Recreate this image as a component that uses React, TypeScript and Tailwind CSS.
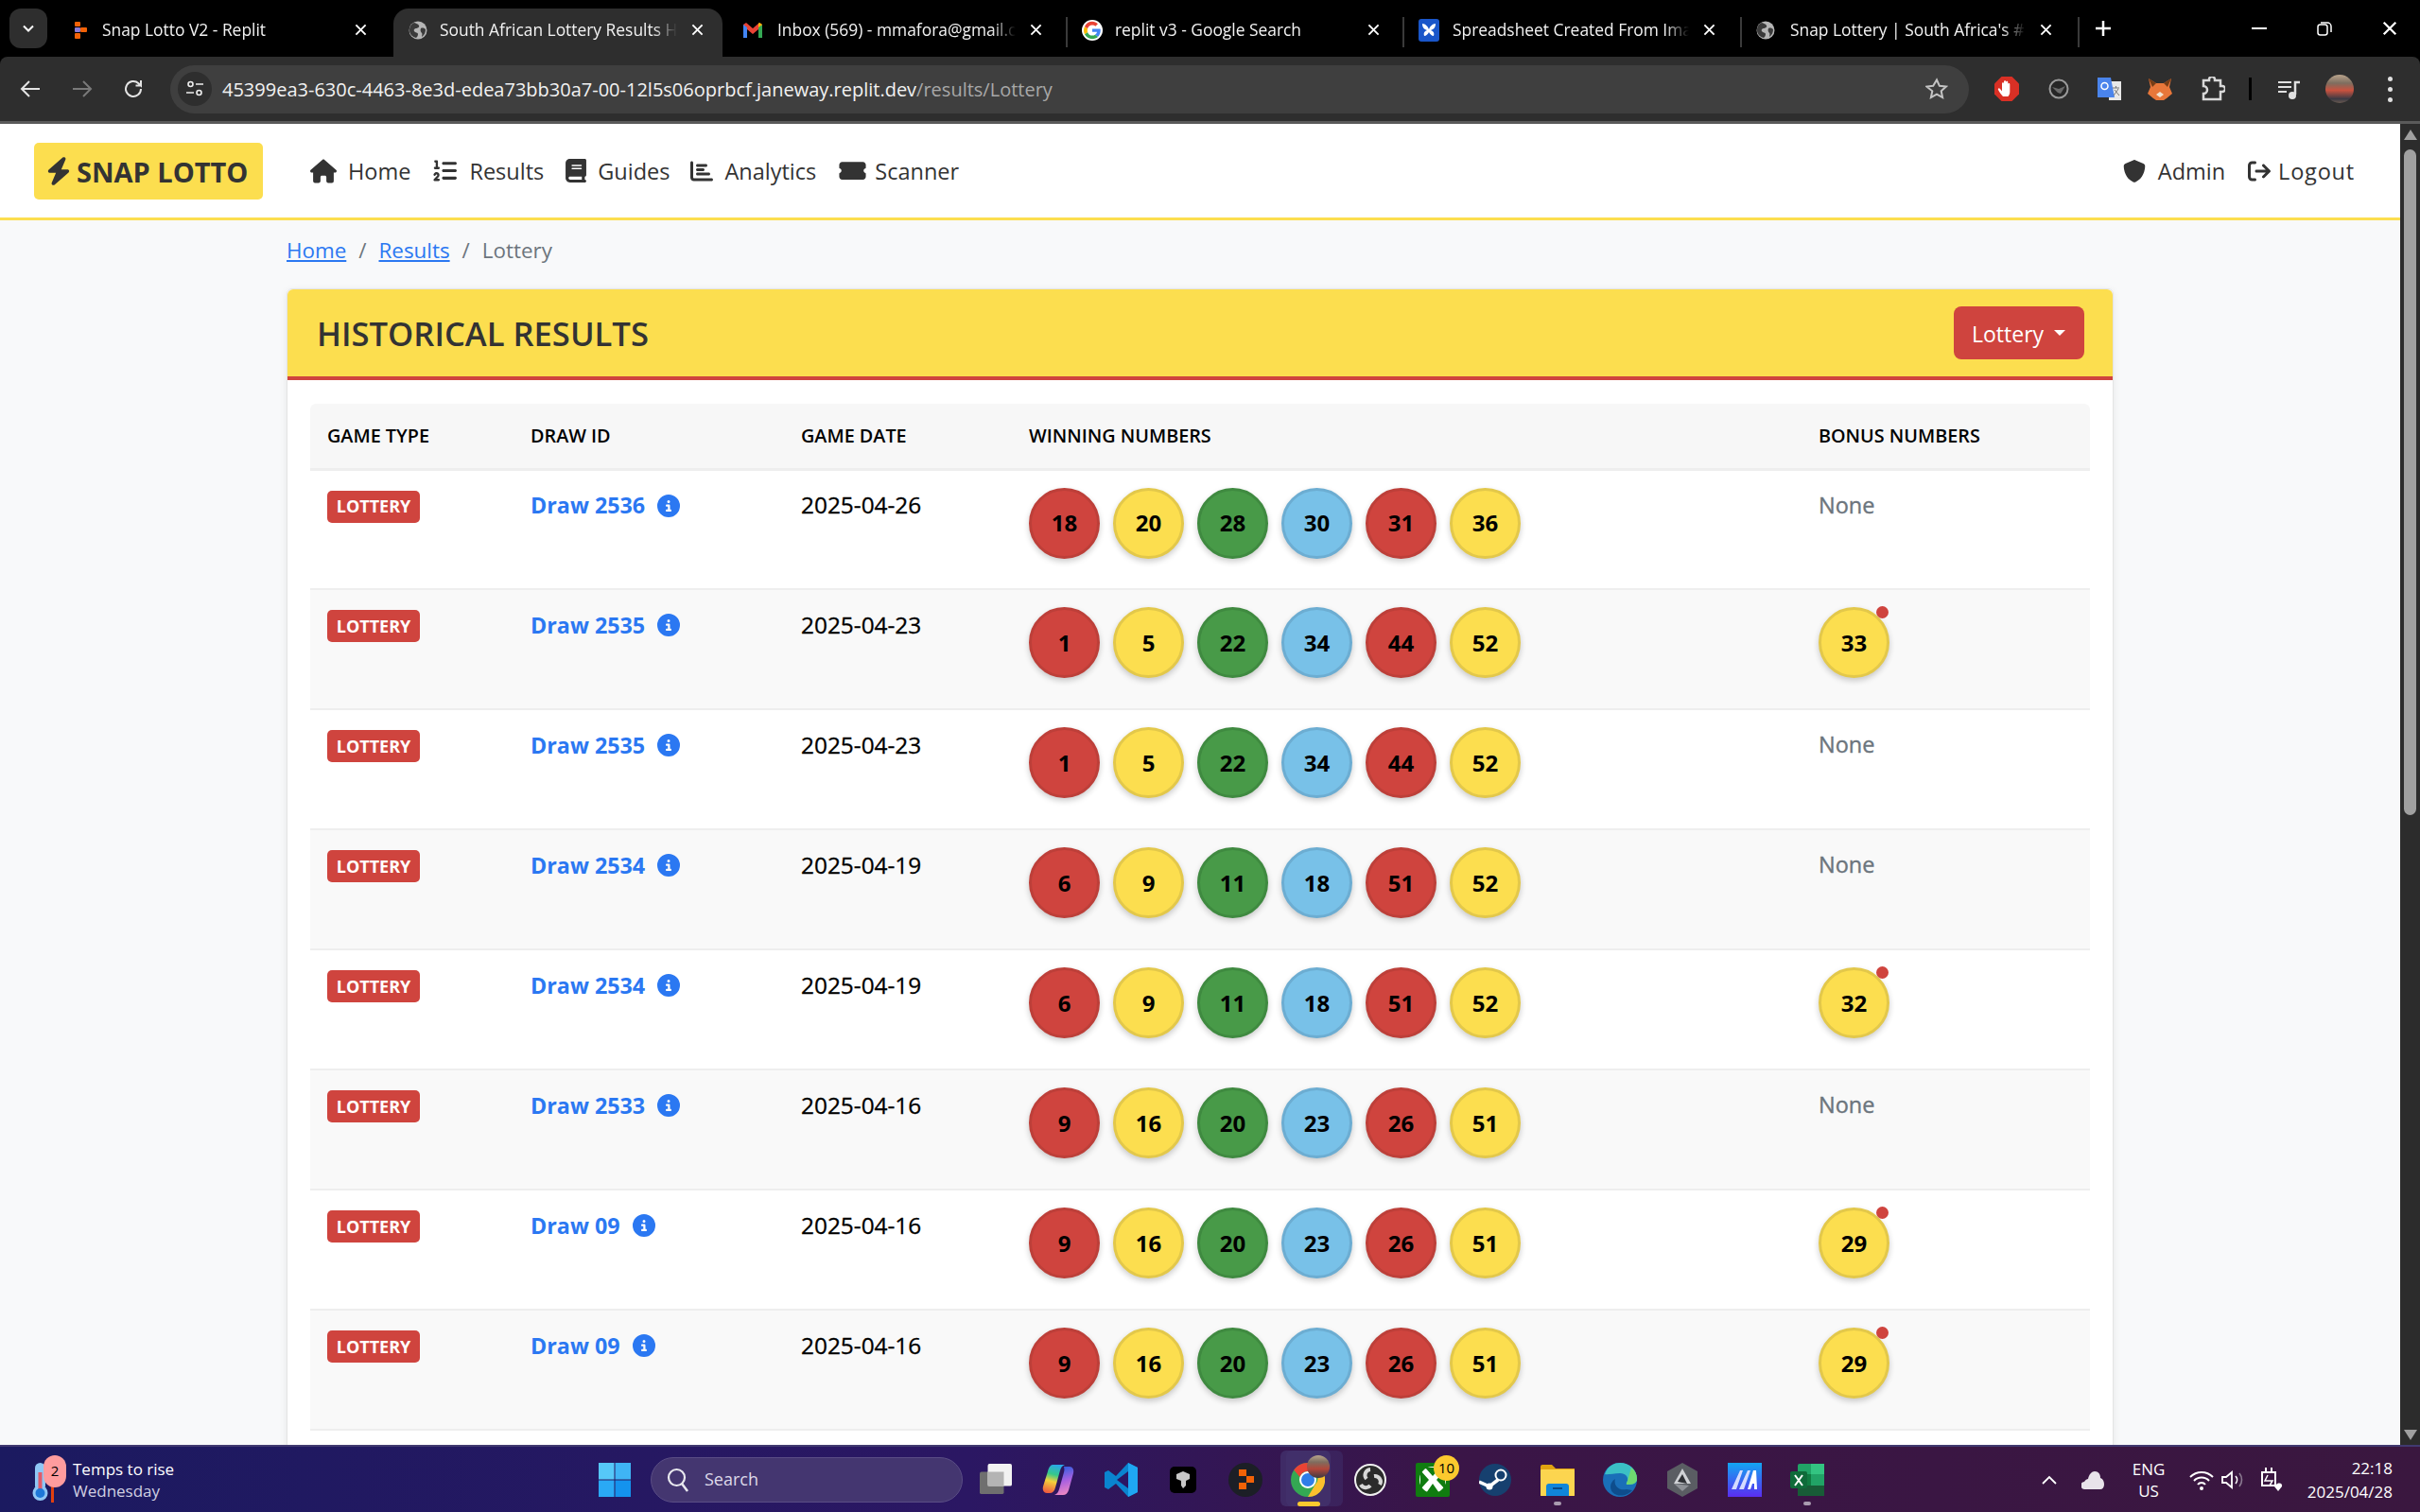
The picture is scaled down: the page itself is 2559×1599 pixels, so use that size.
import React from "react";
import { FaHouse, FaListOl, FaBook, FaChartBar, FaTicketSimple, FaShield, FaArrowRightFromBracket, FaBolt, FaCircleInfo } from "react-icons/fa6";

const Globe = () => (
  <svg viewBox="0 0 20 20" className="w-5 h-5 shrink-0">
    <circle cx="10" cy="10" r="9.5" fill="#b5b5b5" />
    <path d="M6 2c2 1 4 1 5 3s-2 3-3 3-3 1-2 3 4 1 4 3-1 3-2 4C4 17 1 14 1 10s2-7 5-8zM13 8c2-1 4 0 5 1 0 3-1 6-4 8 0-2 1-3 0-4s-2-3-1-5z" fill="#3a3a3a" />
  </svg>
);
const ReplitFav = () => (
  <svg viewBox="0 0 20 20" className="w-5 h-5 shrink-0">
    <rect x="3" y="1" width="6" height="5" rx="1" fill="#f26207" />
    <rect x="9" y="7" width="7" height="5" rx="1" fill="#f26207" />
    <rect x="3" y="13" width="6" height="6" rx="1" fill="#f26207" />
    <rect x="3" y="7" width="6" height="5" rx="1" fill="#8a7bd8" />
  </svg>
);
const GmailFav = () => (
  <svg viewBox="0 0 22 20" className="w-[22px] h-5 shrink-0 -ml-[3px] mr-[3px]">
    <path d="M1 4v14h4V9l6 5 6-5v9h4V4l-3-2-7 6-7-6z" fill="#ea4335" />
    <path d="M1 4v14h4V7z" fill="#4285f4" />
    <path d="M21 4v14h-4V7z" fill="#34a853" />
    <path d="M17 7l4-3-3-2-1 1z" fill="#fbbc04" />
  </svg>
);
const GoogleFav = () => (
  <svg viewBox="0 0 48 48" className="w-[22px] h-[22px] shrink-0">
    <circle cx="24" cy="24" r="24" fill="#fff" />
    <path d="M43 24.5c0-1.500-.1-2.700-.4-4H24v7.500h10.800c-.5 2.700-2 4.800-4.300 6.300l6.500 5c3.800-3.500 6-8.700 6-14.800z" fill="#4285f4" />
    <path d="M24 44c5.400 0 9.900-1.800 13-4.700l-6.500-5c-1.800 1.200-4 1.900-6.500 1.900-5 0-9.300-3.400-10.800-8l-6.700 5.200C9.800 39.800 16.400 44 24 44z" fill="#34a853" />
    <path d="M13.200 28.200c-.8-2.500-.8-5.300 0-7.800l-6.700-5.200c-2.800 5.600-2.800 12.600 0 18.200z" fill="#fbbc04" />
    <path d="M24 12c2.900 0 5.400 1 7.400 2.900l5.600-5.600C33.600 6.200 29.100 4 24 4 16.400 4 9.800 8.200 6.500 15.200l6.700 5.200C14.700 15.400 19 12 24 12z" fill="#ea4335" />
  </svg>
);
const SheetFav = () => (
  <svg viewBox="0 0 22 24" className="w-[22px] h-6 shrink-0">
    <rect width="22" height="24" rx="3" fill="#1a56c9" />
    <path d="M4 5c3 0 6 3 7 6 1-3 4-6 7-6 0 4-2 6-5 7 3 1 4 3 3 6-2 0-4-2-5-4-1 2-3 4-5 4-1-3 0-5 3-6-3-1-5-3-5-7z" fill="#fff" />
  </svg>
);
const X = ({ s = 14 }: { s?: number }) => (
  <svg viewBox="0 0 14 14" width={s} height={s} className="shrink-0">
    <path d="M1.500 1.500l11 11M12.500 1.500l-11 11" stroke="#fff" strokeWidth="2" />
  </svg>
);

const tabs = [
  { t: "Snap Lotto V2 - Replit", i: <ReplitFav />, wrap: "w-[356px]", inner: "ml-[12px] w-[252px]", active: false },
  { t: "South African Lottery Results Historical", i: <Globe />, wrap: "w-[348px] mr-[8px]", inner: "ml-[13px] w-[251px]", active: true },
  { t: "Inbox (569) - mmafora@gmail.com", i: <GmailFav />, wrap: "w-[356px]", inner: "ml-[12px] w-[252px]", active: false },
  { t: "replit v3 - Google Search", i: <GoogleFav />, wrap: "w-[356px]", inner: "ml-[13px] w-[252px]", active: false },
  { t: "Spreadsheet Created From Image", i: <SheetFav />, wrap: "w-[357px]", inner: "ml-[14px] w-[250px]", active: false },
  { t: "Snap Lottery | South Africa's #1 Lottery", i: <Globe />, wrap: "w-[357px]", inner: "ml-[16px] w-[249px]", active: false },
];

function TabBar() {
  return (
    <div className="h-[60px] bg-black flex items-end shrink-0 relative">
      <div className="ml-[10px] mb-[9px] w-[40px] h-[42px] rounded-[12px] bg-[#2e2e2e] flex items-center justify-center">
        <svg viewBox="0 0 12 8" className="w-3 h-2"><path d="M1 1.500l5 5 5-5" stroke="#fff" strokeWidth="2" fill="none" /></svg>
      </div>
      <div className="ml-[10px] flex h-[51px]">
        {tabs.map((tab, i) => (
          <div
            key={i}
            className={
              (tab.active ? "rounded-t-[16px] bg-[#2e2e2e] " : "") +
              "flex items-center pl-4 pb-[6px] relative " + tab.wrap
            }
          >
            {tab.i}
            <div className={"overflow-hidden whitespace-nowrap text-[17.4px] text-[#f2f2f2] [mask-image:linear-gradient(to_right,black_90%,transparent)] " + tab.inner}>
              {tab.t}
            </div>
            <div className="ml-[15px]"><X s={13} /></div>
            {i >= 2 && <div className="absolute right-[-1px] top-[9px] h-[32px] w-[2px] bg-[#3a3a3a]" />}
          </div>
        ))}
      </div>
      <svg viewBox="0 0 16 16" className="w-4 h-4 ml-[18px] mb-[22px] shrink-0"><path d="M8 0v16M0 8h16" stroke="#fff" strokeWidth="2.500" /></svg>
      <div className="ml-auto flex items-center mb-[22px] pr-[24px]">
        <div className="w-[16px] h-[2px] bg-white" />
        <svg viewBox="0 0 16 16" className="w-[16px] h-[16px] ml-[53px]"><rect x="1" y="4" width="10" height="11" rx="2.500" stroke="#fff" strokeWidth="1.500" fill="none" /><path d="M4 2h7a4 4 0 0 1 4 4v6" stroke="#fff" strokeWidth="1.500" fill="none" /></svg>
        <div className="ml-[53px]"><X s={16} /></div>
      </div>
    </div>
  );
}

function Toolbar() {
  return (
    <div className="h-[71px] bg-[#2e2e2e] border-b-[3px] border-[#5a5a5a] flex items-center shrink-0 rounded-t-[8px]">
      <svg viewBox="0 0 24 24" className="w-[24px] h-[24px] ml-[20px]"><path d="M22 12H3M11 4l-8 8 8 8" stroke="#e4e4e4" strokeWidth="2" fill="none" /></svg>
      <svg viewBox="0 0 24 24" className="w-[24px] h-[24px] ml-[31px]"><path d="M2 12h19M13 4l8 8-8 8" stroke="#7a7a7a" strokeWidth="2" fill="none" /></svg>
      <svg viewBox="0 0 24 24" className="w-[24px] h-[24px] ml-[30px]"><path d="M20 12a8 8 0 1 1-2.500-5.800L20 8.500V3M20 8.500h-5.500" stroke="#e4e4e4" strokeWidth="2" fill="none" /></svg>
      <div className="ml-[27px] w-[1902px] h-[51px] rounded-full bg-[#3f3f3f] flex items-center pl-[8px] pr-[22px]">
        <div className="w-[36px] h-[36px] rounded-full bg-[#2e2e2e] flex items-center justify-center shrink-0">
          <svg viewBox="0 0 20 20" className="w-5 h-5"><circle cx="5.500" cy="5" r="2.500" stroke="#eee" strokeWidth="1.600" fill="none" /><path d="M11 5h8M1 14h8" stroke="#eee" strokeWidth="1.600" /><circle cx="14.500" cy="14" r="2.500" stroke="#eee" strokeWidth="1.600" fill="none" /></svg>
        </div>
        <div className="ml-[11px] pt-[2px] text-[20px] whitespace-nowrap text-[#f2f2f2]">
          45399ea3-630c-4463-8e3d-edea73bb30a7-00-12l5s06oprbcf.janeway.replit.dev<span className="text-[#a8a8a8]">/results/Lottery</span>
        </div>
        <svg viewBox="0 0 24 24" className="w-[24px] h-[24px] ml-auto"><path d="M12 2.500l2.900 6.300 6.900.8-5.100 4.700 1.400 6.800-6.100-3.500-6.100 3.500 1.400-6.800L1.300 9.600l6.900-.8z" stroke="#c4c4c4" strokeWidth="2" fill="none" /></svg>
      </div>
      <svg viewBox="0 0 26 26" className="w-[26px] h-[26px] ml-[27px]">
        <path d="M7.500 0h11L26 7.500v11L18.500 26h-11L0 18.500v-11z" fill="#d93025" />
        <path d="M9 21c-1.500-1.500-4-5-5-7-.7-1.500 1-2.500 2-1l2 2.500V7.500c0-1.600 2-1.600 2 0V12V5.500c0-1.600 2.200-1.600 2.200 0V12V6c0-1.600 2.100-1.600 2.100 0v6.500V8c0-1.500 2-1.500 2 0v8c0 2.500-1 4-2 5z" fill="#fff" />
      </svg>
      <svg viewBox="0 0 22 22" className="w-[22px] h-[22px] ml-[31px]">
        <circle cx="11" cy="11" r="9.500" fill="#262626" stroke="#9a9a9a" strokeWidth="2" />
        <path d="M4 9l7 2 7-3-5 8-3-1z" fill="#6a6a6a" />
      </svg>
      <div className="w-[26px] h-[26px] ml-[30px]">
        <svg viewBox="0 0 26 26" className="w-[26px] h-[26px]"><rect x="12" y="5" width="13" height="20" fill="#e8e8e8" /><path d="M0 1h14l4 21H0z" fill="#4a84ec" /><circle cx="7.500" cy="10" r="3.500" stroke="#fff" strokeWidth="1.500" fill="none" /><path d="M16 12h7M19.500 10v2M17 20l5-7M18 14l5 6" stroke="#777" strokeWidth="1" /></svg>
      </div>
      <div className="w-[26px] h-[26px] ml-[27px]">
        <svg viewBox="0 0 26 26" className="w-[26px] h-[26px]"><path d="M1 2l8 5h8l8-5-2 9 3 7-6 5-3 2h-8l-3-2-6-5 3-7z" fill="#e8773a" /><path d="M1 2l8 5-4 4zM25 2l-8 5 4 4z" fill="#763d16" /><path d="M9 19l4 3 4-3-4-3z" fill="#f3e3d0" /></svg>
      </div>
      <div className="w-[26px] h-[26px] ml-[30px]">
        <svg viewBox="0 0 26 26" className="w-[26px] h-[26px]"><path d="M9 4V3a3 3 0 0 1 6 0v1h6v6h2a3 3 0 0 1 0 6h-2v8H3v-6a3 3 0 0 0 0-8V4z" stroke="#d8d8d8" strokeWidth="2.500" fill="none" /></svg>
      </div>
      <div className="w-[3px] h-[24px] ml-[25px] bg-black" />
      <div className="w-[26px] h-[26px] ml-[26px]">
        <svg viewBox="0 0 26 26" className="w-[26px] h-[26px]"><path d="M2 6h14M2 11h14M2 16h9" stroke="#e0e0e0" strokeWidth="2" /><path d="M20 19V6h5" stroke="#e0e0e0" strokeWidth="2.500" fill="none" /><circle cx="17" cy="20" r="4" fill="#e0e0e0" /></svg>
      </div>
      <div className="w-[30px] h-[30px] ml-[26px] rounded-full bg-[linear-gradient(180deg,#b9a48c_0%,#7e6d5f_30%,#c9523f_55%,#3c3a44_85%,#6a5a50_100%)]" />
      <div className="ml-[36px] flex flex-col gap-[6px]">
        <div className="w-[5px] h-[5px] rounded-full bg-[#e0e0e0]" />
        <div className="w-[5px] h-[5px] rounded-full bg-[#e0e0e0]" />
        <div className="w-[5px] h-[5px] rounded-full bg-[#e0e0e0]" />
      </div>
    </div>
  );
}

function NavItem({ icon, label, cls }: { icon: React.ReactNode; label: string; cls: string }) {
  return (
    <div className={"flex items-center text-[23.5px] text-[#333] " + cls}>
      {icon}
      <span className="pt-[2px]">{label}</span>
    </div>
  );
}

function SiteNav() {
  return (
    <div className="h-[102px] bg-white border-b-[3px] border-[#fcde4f] flex items-center pl-[36px] pr-[48px] shrink-0">
      <div className="w-[242px] h-[60px] rounded-[5px] bg-[#fcde4f] flex items-center pl-[13px] text-[#333] font-bold text-[29px] whitespace-nowrap">
        <FaBolt className="w-[26px] h-[32px] mr-[6px]" />
        <span className="pt-[2px]">SNAP LOTTO</span>
      </div>
      <NavItem cls="ml-[50px]" label="Home" icon={<FaHouse className="w-[28px] h-[26px] mr-[12px]" />} />
      <NavItem cls="ml-[24px]" label="Results" icon={<FaListOl className="w-[25px] h-[25px] mr-[13px]" />} />
      <NavItem cls="ml-[23px]" label="Guides" icon={<FaBook className="w-[22px] h-[25px] mr-[12px]" />} />
      <NavItem cls="ml-[22px]" label="Analytics" icon={<FaChartBar className="w-[24px] h-[24px] mr-[12px]" />} />
      <NavItem cls="ml-[24px]" label="Scanner" icon={<FaTicketSimple className="w-[29px] h-[25px] mr-[9px]" />} />
      <NavItem cls="ml-auto" label="Admin" icon={<FaShield className="w-[24px] h-[24px] mr-[13px]" />} />
      <NavItem cls="ml-[23px] tracking-[0.8px]" label="Logout" icon={<FaArrowRightFromBracket className="w-[26px] h-[24px] mr-[7px]" />} />
    </div>
  );
}

const ballCls: Record<string, string> = {
  red: "bg-[#cf443e] border-[#bd3f39]",
  yellow: "bg-[#fcde4f] border-[#e3c84a]",
  green: "bg-[#489a48] border-[#3f8a40]",
  blue: "bg-[#78c1e8] border-[#6cadd2]",
};
const order = ["red", "yellow", "green", "blue", "red", "yellow"];

function Ball({ n, c, dot }: { n: number; c: string; dot?: boolean }) {
  return (
    <div className={"relative w-[75px] h-[75px] rounded-full border-[3px] flex items-center justify-center text-[24px] font-bold text-black shadow-[0_3px_6px_rgba(0,0,0,0.2)] " + ballCls[c]}>
      {n}
      {dot && <div className="absolute -top-[4px] right-[-2px] w-[13px] h-[13px] rounded-full bg-[#cf443e]" />}
    </div>
  );
}

const rows: { d: string; date: string; nums: number[]; bonus?: number }[] = [
  { d: "Draw 2536", date: "2025-04-26", nums: [18, 20, 28, 30, 31, 36] },
  { d: "Draw 2535", date: "2025-04-23", nums: [1, 5, 22, 34, 44, 52], bonus: 33 },
  { d: "Draw 2535", date: "2025-04-23", nums: [1, 5, 22, 34, 44, 52] },
  { d: "Draw 2534", date: "2025-04-19", nums: [6, 9, 11, 18, 51, 52] },
  { d: "Draw 2534", date: "2025-04-19", nums: [6, 9, 11, 18, 51, 52], bonus: 32 },
  { d: "Draw 2533", date: "2025-04-16", nums: [9, 16, 20, 23, 26, 51] },
  { d: "Draw 09", date: "2025-04-16", nums: [9, 16, 20, 23, 26, 51], bonus: 29 },
  { d: "Draw 09", date: "2025-04-16", nums: [9, 16, 20, 23, 26, 51], bonus: 29 },
];

function ResultsTable() {
  return (
    <table className="w-[1882px] table-fixed border-collapse">
      <colgroup>
        <col className="w-[215px]" />
        <col className="w-[286px]" />
        <col className="w-[241px]" />
        <col className="w-[835px]" />
        <col className="w-[305px]" />
      </colgroup>
      <thead>
        <tr className="h-[69px] bg-[#f7f7f7] border-b-[3px] border-[#eeeeee] text-[19.8px] font-semibold text-black text-left">
          <th className="px-[18px] font-semibold rounded-tl-[6px]">GAME TYPE</th>
          <th className="px-[18px] font-semibold">DRAW ID</th>
          <th className="px-[18px] font-semibold">GAME DATE</th>
          <th className="px-[18px] font-semibold">WINNING NUMBERS</th>
          <th className="px-[18px] font-semibold rounded-tr-[6px]">BONUS NUMBERS</th>
        </tr>
      </thead>
      <tbody>
        {rows.map((r, i) => (
          <tr key={i} className={i % 2 ? "h-[127px] bg-[#f9f9f9] border-b-2 border-[#eeeeee]" : "h-[127px] bg-white border-b-2 border-[#eeeeee]"}>
            <td className="px-[18px] pt-[21px] align-top">
              <div className="w-[98px] h-[34px] rounded-[5px] bg-[#cf443e] text-white font-bold text-[18px] flex items-center justify-center">LOTTERY</div>
            </td>
            <td className="px-[18px] pt-[19px] align-top">
              <div className="flex items-center h-[36px] text-[#2b78f2] font-bold text-[23.3px]">
                {r.d}
                <FaCircleInfo className="w-[24px] h-[24px] ml-[13px] text-[#2b78f2]" />
              </div>
            </td>
            <td className="px-[18px] pt-[19px] align-top">
              <div className="h-[36px] flex items-center text-[24.4px] font-medium text-black [-webkit-text-stroke:0.3px_currentColor]">{r.date}</div>
            </td>
            <td className="px-[18px] pt-[18px] align-top">
              <div className="flex gap-[14px]">
                {r.nums.map((n, j) => <Ball key={j} n={n} c={order[j]} />)}
              </div>
            </td>
            <td className="px-[18px] pt-[19px] align-top">
              {r.bonus ? (
                <div className="-mt-[1px]"><Ball n={r.bonus} c="yellow" dot /></div>
              ) : (
                <div className="h-[36px] flex items-center text-[23.5px] font-medium text-[#6c757d] [-webkit-text-stroke:0.4px_currentColor]">None</div>
              )}
            </td>
          </tr>
        ))}
      </tbody>
    </table>
  );
}

function Page() {
  return (
    <div className="flex-1 min-w-0 bg-[#f8f9fa] overflow-hidden flex flex-col">
      <SiteNav />
      <div className="w-[1932px] mx-auto">
        <div className="pt-[15px] h-[49px] flex items-center gap-[13px] text-[22.4px]">
          <span className="text-[#2b78f2] underline">Home</span>
          <span className="text-[#6c757d]">/</span>
          <span className="text-[#2b78f2] underline">Results</span>
          <span className="text-[#6c757d]">/</span>
          <span className="text-[#6c757d]">Lottery</span>
        </div>
        <div className="mt-[23px] bg-white border border-[#e4e4e4] rounded-[6px] shadow-[0_2px_8px_rgba(0,0,0,0.08)]">
          <div className="h-[96px] bg-[#fcde4f] border-b-4 border-[#cf443e] rounded-t-[6px] flex items-center justify-between pl-[31px] pr-[30px]">
            <div className="text-[34.6px] pt-[2px] font-semibold text-[#333]">HISTORICAL RESULTS</div>
            <div className="w-[138px] h-[56px] rounded-[8px] bg-[#cf443e] text-white text-[23px] flex items-center pl-[19px]">
              <span className="pt-[2px]">Lottery</span>
              <div className="ml-[11px] w-0 h-0 border-x-[6px] border-x-transparent border-t-[6px] border-t-white" />
            </div>
          </div>
          <div className="pt-[25px] px-[24px] pb-[60px]">
            <ResultsTable />
          </div>
        </div>
      </div>
    </div>
  );
}

function Scrollbar() {
  return (
    <div className="w-[21px] bg-[#2c2c2c] flex flex-col items-center shrink-0 pt-[6px]">
      <div className="w-0 h-0 border-x-[7px] border-x-transparent border-b-[11px] border-b-[#a0a0a0]" />
      <div className="w-[13px] h-[704px] mt-[10px] rounded-full bg-[#a0a0a0]" />
      <div className="mt-auto mb-[5px] w-0 h-0 border-x-[7px] border-x-transparent border-t-[11px] border-t-[#a0a0a0]" />
    </div>
  );
}

const T = ({ children, cls = "" }: { children: React.ReactNode; cls?: string }) => (
  <div className={"w-[66px] h-[69px] flex items-center justify-center relative " + cls}>{children}</div>
);

function Taskbar() {
  return (
    <div className="h-[71px] shrink-0 flex items-center border-t-2 border-[#413a70] bg-[linear-gradient(90deg,#1b1a60_0%,#2b1763_40%,#3a1547_60%,#3a173f_100%)] text-white">
      <div className="w-[633px] h-full flex items-center pl-[34px]">
        <div className="relative w-[43px] h-[52px] shrink-0">
          <svg viewBox="0 0 43 52" className="w-[43px] h-[52px]">
            <rect x="3" y="8" width="11" height="30" rx="5.500" fill="#8fc7f5" />
            <circle cx="8.500" cy="40" r="8" fill="#8fc7f5" />
            <rect x="6.500" y="18" width="4" height="20" fill="#e15a6a" />
            <circle cx="8.500" cy="40" r="5" fill="#1e78d8" />
            <rect x="20" y="30" width="3" height="20" fill="#e2400f" />
          </svg>
          <div className="absolute left-[12px] top-0 w-[24px] h-[34px] rounded-full bg-[#ff9c9e] text-black text-[15px] flex items-center justify-center">2</div>
        </div>
        <div className="leading-[23px] text-[17px] whitespace-nowrap">
          <div>Temps to rise</div>
          <div className="text-[#d0cfe2]">Wednesday</div>
        </div>
      </div>
      <svg viewBox="0 0 34 36" className="w-[34px] h-[36px] shrink-0">
        <rect width="16.500" height="17.500" fill="#56c8f8" /><rect x="17.500" width="16.500" height="17.500" fill="#3fb4f5" />
        <rect y="18.500" width="16.500" height="17.500" fill="#2aa9f5" /><rect x="17.500" y="18.500" width="16.500" height="17.500" fill="#1493ee" />
      </svg>
      <div className="ml-[21px] w-[330px] h-[48px] rounded-full bg-[#443670] border border-[#5a4d85] flex items-center pl-[16px] shrink-0">
        <svg viewBox="0 0 24 26" className="w-[24px] h-[26px]"><circle cx="10.500" cy="10.500" r="8.500" stroke="#e8e8ee" strokeWidth="2.200" fill="none" /><path d="M16 17l6 8" stroke="#e8e8ee" strokeWidth="2.500" /></svg>
        <span className="ml-[16px] text-[#ded9e9] text-[18px]">Search</span>
      </div>
      <div className="ml-[2px] flex shrink-0">
        <T>
          <svg viewBox="0 0 36 36" className="w-[36px] h-[34px]"><rect y="9" width="27" height="25" rx="2" fill="#6f6f6f" /><rect x="9" width="27" height="25" rx="2" fill="#f2f2f2" /><rect x="9" y="9" width="18" height="16" fill="#b4b4b4" /></svg>
        </T>
        <T>
          <svg viewBox="0 0 34 36" className="w-[34px] h-[36px]">
            <defs>
              <linearGradient id="cpa" x1="0.6" x2="0.4" y1="0" y2="1"><stop offset="0" stopColor="#2aa8e8" /><stop offset="0.35" stopColor="#35c88a" /><stop offset="0.6" stopColor="#f4d13b" /><stop offset="1" stopColor="#f0603f" /></linearGradient>
              <linearGradient id="cpb" x1="0.4" x2="0.6" y1="0" y2="1"><stop offset="0" stopColor="#2f5fe0" /><stop offset="0.5" stopColor="#a860e0" /><stop offset="1" stopColor="#f08ac0" /></linearGradient>
            </defs>
            <path d="M11 2h13c-3 1-4 3-5 6l-5 18c-1 4-3 6-6 6H5c-3 0-5-3-4-7l5-16c1-4 3-7 5-7z" fill="url(#cpa)" />
            <path d="M23 4h6c3 0 5 3 4 7l-5 18c-1 3-3 5-6 5h-9c3-1 4-3 5-6l5-18c1-3 0-5 0-6z" fill="url(#cpb)" />
          </svg>
        </T>
        <T>
          <svg viewBox="0 0 36 36" className="w-[36px] h-[36px]"><path d="M26 0l10 5v26l-10 5-13-14-8 6-4-2V10l4-2 8 6z" fill="#0a84cf" /><path d="M26 0l10 5v26l-10 5z" fill="#1fa6f2" /><path d="M26 9L14 18l12 9z" fill="#2b1763" /></svg>
        </T>
        <T>
          <div className="w-[28px] h-[28px] rounded-[5px] bg-black flex items-center justify-center"><svg viewBox="0 0 16 18" className="w-[16px] h-[18px]"><path d="M1 3l7-3 7 3v5l-4 2v5l-3 3-2-3v-5L1 8z" fill="#c8c8c8" /></svg></div>
        </T>
        <T>
          <div className="w-[36px] h-[36px] rounded-full bg-[#1c1f26] flex flex-col items-start justify-center pl-[11px] gap-0">
            <div className="w-[8px] h-[7px] bg-[#f26207]" />
            <div className="w-[8px] h-[7px] bg-[#f26207] ml-[8px]" />
            <div className="w-[8px] h-[7px] bg-[#f26207]" />
          </div>
        </T>
        <T>
          <div className="absolute left-[10px] top-[4px] w-[60px] h-[59px] rounded-[6px] bg-[#3f2f6b]/50" />
          <div className="absolute left-[4px] top-[4px] w-[53px] h-[59px] rounded-[6px] bg-[#45346f]/70" />
          <svg viewBox="0 0 36 36" className="w-[36px] h-[36px] relative">
            <circle cx="18" cy="18" r="18" fill="#34a853" />
            <path d="M18 0a18 18 0 0 1 15.600 9H18a9 9 0 0 0-8.500 6L3.200 7.500A18 18 0 0 1 18 0z" fill="#ea4335" />
            <path d="M33.600 9A18 18 0 0 1 18 36l8-13.500A9 9 0 0 0 25 9z" fill="#fbc02d" />
            <circle cx="18" cy="18" r="9" fill="#fff" /><circle cx="18" cy="18" r="7" fill="#2f7de8" />
          </svg>
          <div className="absolute left-[32px] top-[9px] w-[24px] h-[24px] rounded-full bg-[linear-gradient(180deg,#b9a48c_0%,#7e6d5f_30%,#b2473a_60%,#3c3a44_100%)]" />
          <div className="absolute left-[22px] bottom-[6px] w-[24px] h-[5px] rounded-full bg-[#fcc92e]" />
        </T>
        <T>
          <svg viewBox="0 0 34 34" className="w-[34px] h-[34px]"><circle cx="17" cy="17" r="16" fill="#2b2b2b" stroke="#f0f0f0" strokeWidth="2" /><path d="M17 6a6 6 0 0 0-4 10M7 22a6 6 0 0 0 10 1M27 22a6 6 0 0 0-6-9" stroke="#d8d8d8" strokeWidth="4" fill="none" /></svg>
        </T>
        <T>
          <div className="w-[36px] h-[36px] rounded-[2px] bg-[#107c10] flex items-center justify-center"><svg viewBox="0 0 30 30" className="w-[30px] h-[30px]"><circle cx="15" cy="15" r="14" fill="#fff" /><path d="M15 11L7 2h16zM11 15L2 25V5zM19 15l9 10V5zM15 19l7 10H8z" fill="#107c10" /></svg></div>
          <div className="absolute left-[34px] top-[9px] w-[27px] h-[27px] rounded-full bg-[#fcc92e] text-black text-[15px] flex items-center justify-center">10</div>
        </T>
        <T>
          <svg viewBox="0 0 34 34" className="w-[34px] h-[34px]"><circle cx="17" cy="17" r="17" fill="#16406f" /><circle cx="23" cy="12" r="5.500" stroke="#fff" strokeWidth="2" fill="none" /><path d="M0 19l11 5 9-7" stroke="#fff" strokeWidth="3.500" fill="none" /><circle cx="11" cy="24" r="3.500" fill="#fff" /></svg>
        </T>
        <T>
          <svg viewBox="0 0 36 34" className="w-[36px] h-[34px]"><path d="M0 3a2 2 0 0 1 2-2h10l4 4h20v29H0z" fill="#e0a411" /><rect y="6" width="36" height="28" rx="1" fill="#fcd54f" /><path d="M6 34V24a3 3 0 0 1 3-3h18a3 3 0 0 1 3 3v10z" fill="#1086da" /><rect x="13" y="25" width="10" height="2" fill="#0a4a87" /></svg>
          <div className="absolute left-[29px] bottom-[7px] w-[8px] h-[4px] rounded-full bg-[#a99bb0]" />
        </T>
        <T>
          <svg viewBox="0 0 36 36" className="w-[36px] h-[36px]"><circle cx="18" cy="18" r="18" fill="#1a6fb8" /><path d="M2 12C5 3 12 0 18 0c10 0 18 7 18 17 0 5-5 6-10 6-2 0-1-2 0-4 1-4-2-8-8-8-7 0-13 2-16 1z" fill="#3bc0c5" /><path d="M30 5c4 3 6 7 6 12 0 5-5 6-10 6-2 0-1-2 0-4z" fill="#6fd870" /><path d="M13 17c-2 6 3 13 12 11l6 1c-5 6-15 8-21 2-3-4-3-10 3-14z" fill="#0e4d8c" /></svg>
        </T>
        <T>
          <svg viewBox="0 0 32 36" className="w-[32px] h-[36px]"><path d="M16 0l16 9v18l-16 9L0 27V9z" fill="#5a5d63" /><path d="M16 6l9 16H7z" fill="#d0d2d6" /><path d="M16 12l5 10-10-2z" fill="#2f3136" /><path d="M7 22l16 2-7 6z" fill="#8e9197" /></svg>
        </T>
        <T>
          <div className="w-[36px] h-[36px] bg-[linear-gradient(180deg,#12a6f2,#5b2df0)] flex items-center justify-center"><svg viewBox="0 0 28 20" className="w-[28px] h-[20px]"><path d="M0 20L9 0h3L5 20zM8 20L17 0h3l-7 20z" fill="#d5dcff" /><path d="M17 20l6-20h3l1 20h-3v-6h-2l-2 6z" fill="#fff" /></svg></div>
        </T>
        <T>
          <svg viewBox="0 0 36 34" className="w-[36px] h-[34px]"><rect x="8" y="0" width="28" height="34" rx="2" fill="#21a366" /><rect x="22" y="0" width="14" height="11" fill="#33c481" /><rect x="8" y="11" width="14" height="12" fill="#107c41" /><rect x="22" y="23" width="14" height="11" fill="#185c37" /><rect x="8" y="23" width="14" height="11" fill="#185c37" /><rect x="0" y="8" width="18" height="18" rx="2" fill="#0f6b3a" /><path d="M5 12l8 11M13 12l-8 11" stroke="#fff" strokeWidth="2" /></svg>
          <div className="absolute left-[29px] bottom-[7px] w-[8px] h-[4px] rounded-full bg-[#a99bb0]" />
        </T>
      </div>
      <div className="ml-auto pr-[28px] flex items-center shrink-0">
        <div className="w-[34px] flex justify-center"><svg viewBox="0 0 16 10" className="w-[16px] h-[10px]"><path d="M1 9l7-7 7 7" stroke="#fff" strokeWidth="1.800" fill="none" /></svg></div>
        <svg viewBox="0 0 26 22" className="w-[26px] h-[22px] ml-[17px]"><path d="M4 21a4 4 0 0 1-1-8c1-2 3-3 4-3 1-5 4-8 7-8 4 0 6 3 6 7 3 1 4 4 4 7s-2 5-4 5z" fill="#e8e3ea" /></svg>
        <div className="ml-[20px] w-[50px] text-center text-[17px] leading-[23px]"><div>ENG</div><div>US</div></div>
        <svg viewBox="0 0 26 24" className="w-[26px] h-[24px] ml-[18px]"><path d="M1 9a17 17 0 0 1 24 0M5 13a11 11 0 0 1 16 0M9 17a5 5 0 0 1 8 0" stroke="#fff" strokeWidth="2" fill="none" /><circle cx="13" cy="21" r="2" fill="#fff" /></svg>
        <svg viewBox="0 0 24 24" className="w-[24px] h-[24px] ml-[7px]"><path d="M2 9h4l6-5v16l-6-5H2z" stroke="#fff" strokeWidth="1.800" fill="none" /><path d="M16 8a6 6 0 0 1 0 8" stroke="#fff" strokeWidth="1.600" fill="none" /><path d="M20 5a11 11 0 0 1 0 14" stroke="#8a7a90" strokeWidth="1.600" fill="none" /></svg>
        <svg viewBox="0 0 26 26" className="w-[26px] h-[26px] ml-[18px]"><rect x="2" y="5" width="14" height="14" stroke="#fff" strokeWidth="2" fill="none" /><path d="M6 0v4M12 0v4" stroke="#fff" strokeWidth="2" /><path d="M8 8l-3 6h8l-3 5" stroke="#fff" strokeWidth="1.500" fill="none" /><path d="M17 18c3-3 7-1 6 2l-4 5-4-5c-.5-1 0-2 2-2z" fill="#fff" /></svg>
        <div className="w-[115px] text-right text-[17px] leading-[25px] pr-[1px]"><div>22:18</div><div>2025/04/28</div></div>
      </div>
    </div>
  );
}

export default function App() {
  return (
    <div className="w-[2559px] h-[1599px] overflow-hidden flex flex-col bg-black font-['Open_Sans',sans-serif]">
      <TabBar />
      <Toolbar />
      <div className="flex-1 min-h-0 flex">
        <Page />
        <Scrollbar />
      </div>
      <Taskbar />
    </div>
  );
}
